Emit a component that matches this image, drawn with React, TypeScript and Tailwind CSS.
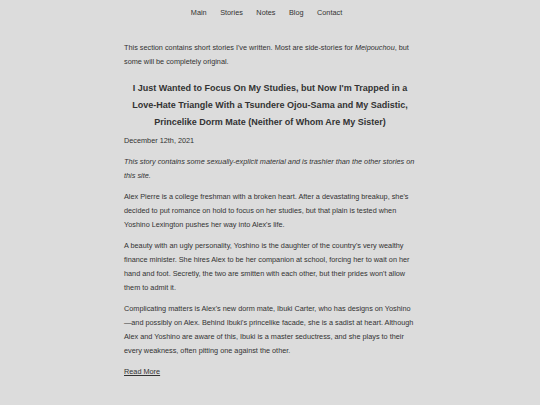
export default function App() {
  const nav = ["Main", "Stories", "Notes", "Blog", "Contact"];
  return (
    <div className="min-h-[405px] bg-[#dcdcdc] text-[#333] font-['Liberation_Sans',Arial,sans-serif]">
      <nav className="flex justify-center gap-[13.5px] pt-[6px] pr-[7px] text-[7.3px] leading-[14px]">
        {nav.map((n) => (
          <a key={n} href="#" className="text-[#333]">
            {n}
          </a>
        ))}
      </nav>
      <main className="mx-auto w-[292px] pt-[21px] text-[7.3px] leading-[14px]">
        <p className="mb-[7px]">
          This section contains short stories I've written. Most are side-stories for <em>Meipouchou</em>, but
          some will be completely original.
        </p>
        <h2 className="mt-[11px] text-center text-[9px] font-bold leading-[17px]">
          I Just Wanted to Focus On My Studies, but Now I'm Trapped in a Love-Hate Triangle With a Tsundere
          Ojou-Sama and My Sadistic, Princelike Dorm Mate (Neither of Whom Are My Sister)
        </h2>
        <p className="mt-[2.5px] mb-[7px]">December 12th, 2021</p>
        <p className="mb-[7px] italic">
          This story contains some sexually-explicit material and is trashier than the other stories on this site.
        </p>
        <p className="mb-[7px]">
          Alex Pierre is a college freshman with a broken heart. After a devastating breakup, she's decided to
          put romance on hold to focus on her studies, but that plain is tested when Yoshino Lexington pushes her
          way into Alex's life.
        </p>
        <p className="mb-[7px]">
          A beauty with an ugly personality, Yoshino is the daughter of the country's very wealthy finance
          minister. She hires Alex to be her companion at school, forcing her to wait on her hand and foot.
          Secretly, the two are smitten with each other, but their prides won't allow them to admit it.
        </p>
        <p className="mb-[7px]">
          Complicating matters is Alex's new dorm mate, Ibuki Carter, who has designs on Yoshino—and possibly on
          Alex. Behind Ibuki's princelike facade, she is a sadist at heart. Although Alex and Yoshino are aware of
          this, Ibuki is a master seductress, and she plays to their every weakness, often pitting one against the
          other.
        </p>
        <a href="#" className="underline text-[#333]">
          Read More
        </a>
      </main>
    </div>
  );
}
